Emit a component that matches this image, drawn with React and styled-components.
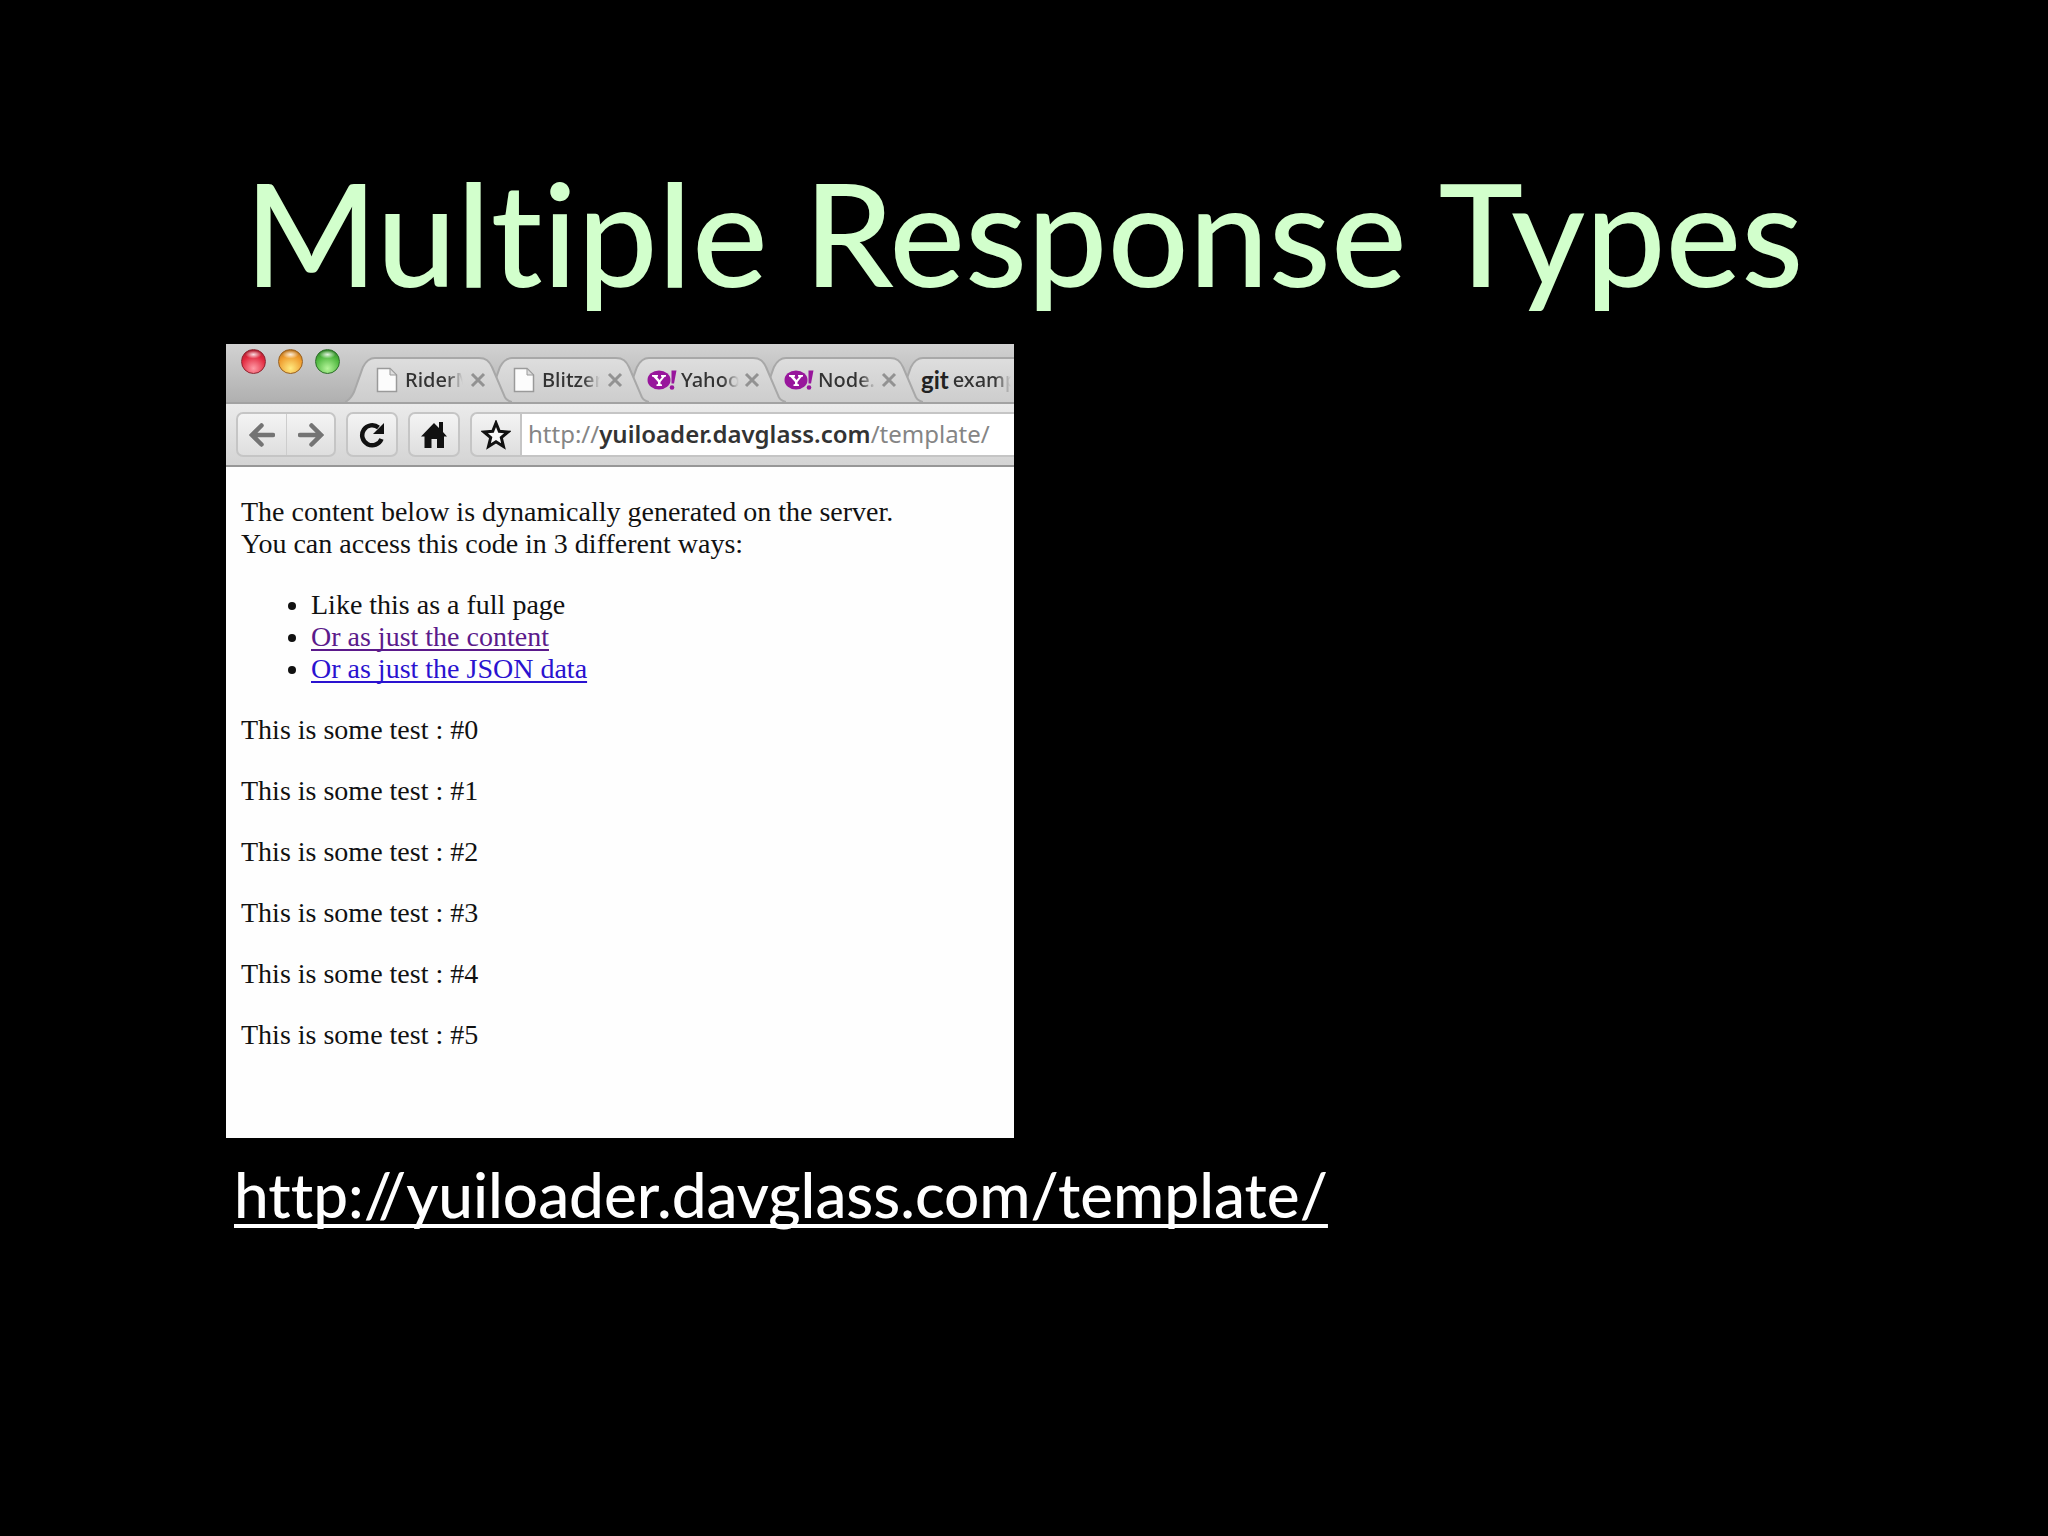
import React from "react";
import styled, { createGlobalStyle } from "styled-components";

const slideFont = `"Gill Sans", Lato, "Open Sans", sans-serif`;
const uiFont = `"Lucida Grande", "Noto Sans", "Open Sans", sans-serif`;
const pageFont = `"Liberation Serif", "Times New Roman", serif`;

const GlobalStyle = createGlobalStyle`
  *, *::before, *::after { box-sizing: border-box; }
  body { margin: 0; background: #000; }
`;

const Slide = styled.main`
  min-height: 100vh;
  padding: 132px 226px 96px;
  background: #000;
  font-family: ${slideFont};
  font-variant-ligatures: none;
`;

const Title = styled.h1`
  margin: 0 0 12px;
  color: #d2ffcc;
  font-size: 143px;
  font-weight: 500;
  line-height: 200px;
  text-align: center;
  white-space: nowrap;
`;

const BrowserWindow = styled.section`
  width: 100%;
  max-width: 788px;
  min-height: 794px;
  overflow: hidden;
  background: #fefefe;
`;

const TabStrip = styled.header`
  display: flex;
  height: 60px;
  padding-left: 15px;
  overflow: hidden;
  background: linear-gradient(#d2d2d2, #b0b0b0);
  border-bottom: 2px solid #a2a2a2;
`;

const Lights = styled.div`
  display: flex;
  flex: none;
  gap: 12px;
  padding-top: 5px;
`;

const Light = styled.button`
  width: 25px;
  height: 25px;
  padding: 0;
  border: 1px solid ${(p) => p.$rim};
  border-radius: 50%;
  background:
    radial-gradient(ellipse 8px 4px at 50% 20%, rgba(255, 255, 255, 0.85), rgba(255, 255, 255, 0) 100%),
    radial-gradient(circle at 50% 80%, ${(p) => p.$glow} 0, ${(p) => p.$tone} 60%, ${(p) => p.$rim} 100%);
`;

const Tabs = styled.div`
  display: flex;
  flex: none;
  align-self: flex-end;
  margin-left: 5px;
`;

const Tab = styled.div`
  position: relative;
  z-index: ${(p) => p.$layer};
  display: flex;
  flex: none;
  align-items: center;
  width: 167px;
  height: 45px;
  margin-right: -30px;
  padding: 0 26px 0 ${(p) => (p.$wideIcon ? 28 : 31)}px;
`;

const TabShape = styled.svg`
  position: absolute;
  inset: 0;
  z-index: -1;
  width: 100%;
  height: 100%;
`;

const TabButton = styled.button`
  display: flex;
  flex: 1;
  align-items: center;
  gap: ${(p) => (p.$wideIcon ? 4 : 7)}px;
  min-width: 0;
  padding: 0;
  border: 0;
  background: none;
  color: #333;
  font: 500 20px/28px ${uiFont};

  svg { flex: none; }
`;

const TabLabel = styled.span`
  width: 58px;
  overflow: hidden;
  text-align: left;
  white-space: nowrap;
  mask-image: linear-gradient(to right, #000 72%, transparent 100%);
`;

const GitMark = styled.span`
  color: #222;
  font: 700 24px/28px Lato, sans-serif;
`;

const CloseButton = styled.button`
  display: flex;
  flex: none;
  padding: 0;
  border: 0;
  background: none;
`;

const Toolbar = styled.nav`
  display: flex;
  align-items: center;
  gap: 10px;
  height: 63px;
  padding-left: 10px;
  background: linear-gradient(#ebebeb, #d4d4d4);
  border-bottom: 2px solid #979797;
`;

const ButtonGroup = styled.div`
  display: flex;
  flex: none;
  height: 45px;
  overflow: hidden;
  border: 2px solid #c5c5c5;
  border-radius: 7px;
  background: linear-gradient(#f4f4f4, #dedede);
`;

const ToolButton = styled.button`
  display: flex;
  flex: none;
  align-items: center;
  justify-content: center;
  width: 48px;
  padding: 0;
  border: 0;
  background: none;
  color: ${(p) => (p.$muted ? "#747474" : "#111")};

  & + & { border-left: 1px solid #cdcdcd; }
`;

const AddressBar = styled.div`
  display: flex;
  flex: 1;
  height: 45px;
  overflow: hidden;
  border: 2px solid #c5c5c5;
  border-right: 0;
  border-radius: 7px 0 0 7px;
  background: linear-gradient(#f4f4f4, #dedede);
`;

const Address = styled.div`
  flex: 1;
  padding-left: 6px;
  overflow: hidden;
  border-left: 2px solid #c5c5c5;
  background: #fff;
  color: #858585;
  font: 400 24px/40px ${uiFont};
  white-space: nowrap;

  strong { color: #333; font-weight: 600; }
`;

const Page = styled.article`
  padding: 0 15px;
  color: #111;
  font: 400 28px/32px ${pageFont};

  p, ul { margin: 29px 0; }
  ul { padding-left: 70px; }
`;

const PageLink = styled.a`
  color: ${(p) => (p.$visited ? "#5b1a8b" : "#2a12d0")};
  text-decoration-thickness: 2px;
  text-decoration-skip-ink: none;
  text-underline-offset: 3px;
`;

const SlideLink = styled.a`
  display: inline-block;
  margin: 16px 8px 0;
  color: #fff;
  font-size: 62px;
  font-weight: 500;
  line-height: 80px;
  text-decoration-line: underline;
  text-decoration-thickness: 4px;
  text-decoration-skip-ink: none;
  text-underline-offset: 6px;
`;

function DocumentIcon() {
  return (
    <svg width="22" height="26" viewBox="0 0 22 26" aria-hidden="true">
      <path d="M1.5 1.5H14L20.500 8V24.500H1.500Z" fill="#fcfcfc" stroke="#9a9a9a" strokeWidth="1.500" />
      <path d="M14 1.500V8H20.500Z" fill="#dedede" stroke="#9a9a9a" />
    </svg>
  );
}

function YahooIcon() {
  return (
    <svg width="30" height="24" viewBox="0 0 30 24" aria-hidden="true">
      <ellipse cx="12" cy="12" rx="11.500" ry="9.500" fill="#98169c" />
      <path
        d="M5 7H11V8.500L10 9L12.500 12L15 9L14 8.500V7H19V8.500L17.500 9L13.500 14V16L15 16.500V18H9.500V16.500L11 16V14L6.500 9L5 8.500Z"
        fill="#fff"
      />
      <path d="M24.500 2.500H29.500L27 15.500H24.500Z" fill="#98169c" />
      <circle cx="25" cy="19.500" r="2.300" fill="#98169c" />
    </svg>
  );
}

function CloseIcon() {
  return (
    <svg width="16" height="16" viewBox="0 0 16 16" aria-hidden="true">
      <path d="M2 2L14 14M14 2L2 14" stroke="#929292" strokeWidth="3" />
    </svg>
  );
}

function ArrowIcon({ forward }) {
  return (
    <svg width="26" height="24" viewBox="0 0 26 24" aria-hidden="true">
      <path
        d={forward ? "M2 12H23M13.500 2.500L23 12L13.500 21.500" : "M24 12H3M12.500 2.500L3 12L12.500 21.500"}
        fill="none"
        stroke="currentColor"
        strokeWidth="4.500"
        strokeLinecap="round"
      />
    </svg>
  );
}

function ReloadIcon() {
  return (
    <svg width="26" height="26" viewBox="0 0 26 26" aria-hidden="true">
      <path d="M22.500 17A10 10 0 1 1 19.500 5.500" fill="none" stroke="currentColor" strokeWidth="4.500" />
      <path d="M25 1V12H14Z" fill="currentColor" />
    </svg>
  );
}

function HomeIcon() {
  return (
    <svg width="26" height="28" viewBox="0 0 26 28" aria-hidden="true">
      <path d="M13 2L18 7V1H22V11L26 15.500H23V27H16V18H10.500V27H3.500V15.500H0Z" fill="currentColor" />
    </svg>
  );
}

function StarIcon() {
  return (
    <svg width="30" height="30" viewBox="0 0 30 30" aria-hidden="true">
      <path
        d="M15 3L18.300 11.300L27 12L20.300 17.600L22.500 26.500L15 21.700L7.500 26.500L9.700 17.600L3 12L11.700 11.300Z"
        fill="#f8f8f8"
        stroke="currentColor"
        strokeWidth="3"
      />
    </svg>
  );
}

const lights = [
  { name: "Close window", tone: "#e0263c", glow: "#ff9aa6", rim: "#8e2430" },
  { name: "Minimize window", tone: "#ee9a2c", glow: "#ffea80", rim: "#99601f" },
  { name: "Zoom window", tone: "#4cb53c", glow: "#b5f59a", rim: "#2c6e28" },
];

const tabs = [
  { label: "RiderM", icon: "document" },
  { label: "Blitzen", icon: "document" },
  { label: "Yahoo", icon: "yahoo" },
  { label: "Node.", icon: "yahoo" },
  { label: "examp", icon: "git" },
];

const icons = {
  document: <DocumentIcon />,
  yahoo: <YahooIcon />,
  git: <GitMark>git</GitMark>,
};

function BrowserTab({ label, icon, layer }) {
  const wideIcon = icon !== "document";
  return (
    <Tab $layer={layer} $wideIcon={wideIcon}>
      <TabShape viewBox="0 0 167 45" preserveAspectRatio="none" aria-hidden="true">
        <defs>
          <linearGradient id={`tab-${layer}`} x1="0" y1="0" x2="0" y2="1">
            <stop offset="0" stopColor="#dedede" />
            <stop offset="1" stopColor="#cdcdcd" />
          </linearGradient>
        </defs>
        <path
          d="M0 45C5 43 7 39 9 35L18 10C21 4 24 1 30 1H134C141 1 144 4 147 10L159 38C160 42 163 44 167 45"
          fill={`url(#tab-${layer})`}
          stroke="#a8a8a8"
          strokeWidth="2"
        />
      </TabShape>
      <TabButton $wideIcon={wideIcon}>
        {icons[icon]}
        <TabLabel>{label}</TabLabel>
      </TabButton>
      <CloseButton aria-label={`Close ${label} tab`}>
        <CloseIcon />
      </CloseButton>
    </Tab>
  );
}

export default function App() {
  return (
    <>
      <GlobalStyle />
      <Slide>
        <Title>Multiple Response Types</Title>
        <BrowserWindow aria-label="Browser">
          <TabStrip>
            <Lights>
              {lights.map((l) => (
                <Light key={l.name} aria-label={l.name} $tone={l.tone} $glow={l.glow} $rim={l.rim} />
              ))}
            </Lights>
            <Tabs>
              {tabs.map((t, i) => (
                <BrowserTab key={t.label} {...t} layer={tabs.length - i} />
              ))}
            </Tabs>
          </TabStrip>
          <Toolbar aria-label="Navigation">
            <ButtonGroup>
              <ToolButton $muted aria-label="Back"><ArrowIcon /></ToolButton>
              <ToolButton $muted aria-label="Forward"><ArrowIcon forward /></ToolButton>
            </ButtonGroup>
            <ButtonGroup>
              <ToolButton aria-label="Reload"><ReloadIcon /></ToolButton>
            </ButtonGroup>
            <ButtonGroup>
              <ToolButton aria-label="Home"><HomeIcon /></ToolButton>
            </ButtonGroup>
            <AddressBar>
              <ToolButton aria-label="Bookmark this page"><StarIcon /></ToolButton>
              <Address role="textbox" aria-label="Address" contentEditable suppressContentEditableWarning spellCheck={false}>
                http://<strong>yuiloader.davglass.com</strong>/template/
              </Address>
            </AddressBar>
          </Toolbar>
          <Page>
            <p>
              The content below is dynamically generated on the server.
              <br />
              You can access this code in 3 different ways:
            </p>
            <ul>
              <li>Like this as a full page</li>
              <li><PageLink $visited href="#content">Or as just the content</PageLink></li>
              <li><PageLink href="#json">Or as just the JSON data</PageLink></li>
            </ul>
            {[0, 1, 2, 3, 4, 5].map((n) => (
              <p key={n}>{`This is some test : #${n}`}</p>
            ))}
          </Page>
        </BrowserWindow>
        <SlideLink href="http://yuiloader.davglass.com/template/">
          http://yuiloader.davglass.com/template/
        </SlideLink>
      </Slide>
    </>
  );
}
